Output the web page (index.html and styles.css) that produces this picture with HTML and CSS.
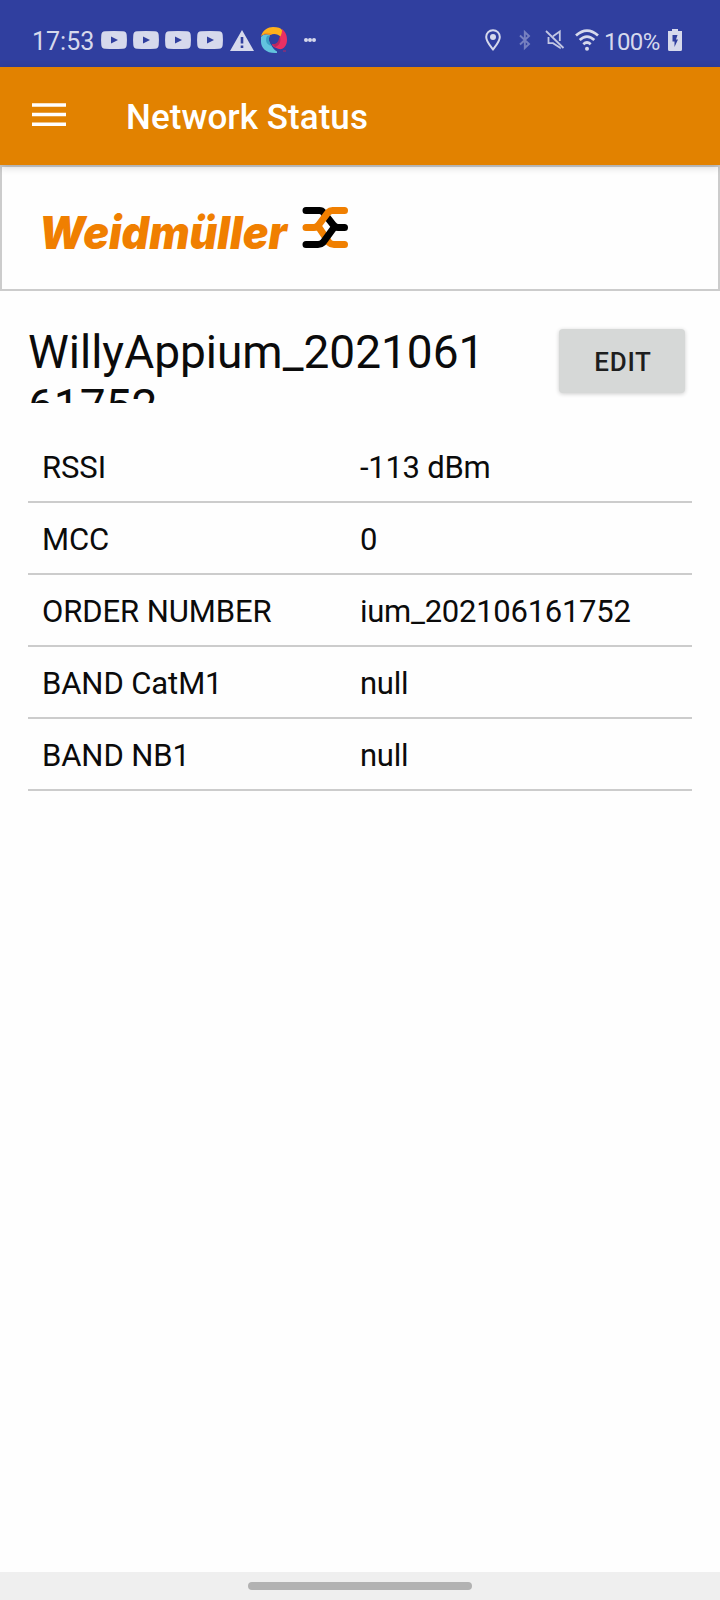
FILE: index.html
```html
<!DOCTYPE html>
<html lang="en">
<head>
<meta charset="utf-8">
<title>Network Status</title>
<link rel="stylesheet" href="styles.css">
</head>
<body>
<div class="screen">
  <div class="status-bar">
    <div class="status-left">
      <span class="clock">17:53</span>
      <svg class="video" viewBox="0 0 26 18"><path fill-rule="evenodd" d="M4 .3Q13-.3 22 .3Q25.5.5 25.7 4Q26.2 9 25.7 14Q25.5 17.500 22 17.700Q13 18.300 4 17.700Q.5 17.500.3 14Q-.2 9 .3 4Q.5.5 4 .3ZM10 5.500V12.500L17 9Z"/></svg>
      <svg class="video" viewBox="0 0 26 18"><path fill-rule="evenodd" d="M4 .3Q13-.3 22 .3Q25.5.5 25.7 4Q26.2 9 25.7 14Q25.5 17.500 22 17.700Q13 18.300 4 17.700Q.5 17.500.3 14Q-.2 9 .3 4Q.5.5 4 .3ZM10 5.500V12.500L17 9Z"/></svg>
      <svg class="video" viewBox="0 0 26 18"><path fill-rule="evenodd" d="M4 .3Q13-.3 22 .3Q25.5.5 25.7 4Q26.2 9 25.7 14Q25.5 17.500 22 17.700Q13 18.300 4 17.700Q.5 17.500.3 14Q-.2 9 .3 4Q.5.5 4 .3ZM10 5.500V12.500L17 9Z"/></svg>
      <svg class="video" viewBox="0 0 26 18"><path fill-rule="evenodd" d="M4 .3Q13-.3 22 .3Q25.5.5 25.7 4Q26.2 9 25.7 14Q25.5 17.500 22 17.700Q13 18.300 4 17.700Q.5 17.500.3 14Q-.2 9 .3 4Q.5.5 4 .3ZM10 5.500V12.500L17 9Z"/></svg>
      <svg class="warning" viewBox="0 0 24 21"><path fill-rule="evenodd" d="M12 0L24 21H0ZM10.700 7V13.500H13.300V7ZM10.700 15.500V18H13.300V15.500Z"/></svg>
      <svg class="swirl" viewBox="0 0 26 26">
        <path fill="#ffb11b" d="M0 9C2 3 7 0 12 0C17 0 20 1 21 3C21 6 21 8 20 10C17 7 13 6 9 8C5 7 3 7 0 9Z"/>
        <path fill="#f7931e" d="M0 9C3 5 7 5 11 7L9 8C5 7 3 7 0 9Z"/>
        <path fill="#ea3063" d="M21 2C25 5 26 9 26 13C26 19 22 23 18 22C14 21 11 19 11 17C16 18 19 15 19 10C21 7 21 5 21 2Z"/>
        <path fill="#b82760" d="M11 17C16 18 18 14 18.500 9C21 14 18 19 14 20Z"/>
        <path fill="#62c3de" d="M0 10C2 7 5 7 9 8C7 12 8 15 10 18C12 21 13 23 16 24.500V26C6 27 0 21 0 15Z"/>
        <path fill="#3aa1c6" d="M9 8C7 12 8 16 11 19C5 18 4 13 6 9Z"/>
        <path fill="#b82760" d="M22 23.500H25V24.500H22Z"/>
      </svg>
      <svg class="dots" viewBox="0 0 12 4"><circle cx="2" cy="2" r="2"/><circle cx="6" cy="2" r="2"/><circle cx="10" cy="2" r="2"/></svg>
    </div>
    <div class="status-right">
      <svg class="pin" viewBox="0 0 16 22"><path d="M8 1.200A6.700 6.700 0 0 0 1.200 8C1.200 12.500 5 16.500 8 20.300C11 16.500 14.800 12.500 14.800 8A6.700 6.700 0 0 0 8 1.200Z" fill="none" stroke="#d6d9ec" stroke-width="2"/><circle cx="8" cy="8" r="3"/></svg>
      <svg class="bluetooth" viewBox="0 0 12 20"><path d="M1 5.500L10 14L5.800 18V2L10 6L1 14.500"/></svg>
      <svg class="mute" viewBox="0 0 20 20"><path d="M1 1L18.500 18M8 6.200L14.800 1.500V11M14.800 17V17.500L8 13.200H3.500V7"/></svg>
      <svg class="wifi" viewBox="0 0 24 22"><path d="M1 6.600Q12-3.400 23 6.600M4.700 11Q12 4.200 19.300 11M8.300 15.200Q12 11.800 15.700 15.200"/><circle cx="12" cy="19.800" r="2"/></svg>
      <span class="percent">100%</span>
      <svg class="battery" viewBox="0 0 14 22"><path fill-rule="evenodd" d="M4 0H10V2H14V20.500Q14 22 12.500 22H1.500Q0 22 0 20.500V2H4ZM4.500 6V12.500H6.500V18L10 10.500H8L9.500 6Z"/></svg>
    </div>
  </div>
  <header class="app-bar">
    <svg class="menu" viewBox="0 0 34 24"><path d="M0 .3H34V3.800H0ZM0 9.800H34V13.300H0ZM0 19.500H34V23H0Z"/></svg>
    <h1 class="app-title">Network Status</h1>
  </header>
  <div class="brand">
    <svg class="logo" viewBox="0 0 320 60">
      <text class="wordmark" x="-3" y="47" textLength="248" lengthAdjust="spacingAndGlyphs">Weidmüller</text>
      <g class="mark">
        <path class="black" d="M264 8.500H277.500Q280 8.500 281.500 10.500L291 22.500Q293 25.500 296 25.500H302.500"/>
        <path class="orange" d="M302.500 8.500H290.500Q288 8.500 286 10.500L277 22.500Q275 25.500 272 25.500H264"/>
        <path class="orange" d="M277 25.500L287 40.500Q289 42.500 292 42.500H302.500"/>
        <path class="black" d="M292 25.500L281 40.500Q279 42.500 276 42.500H264"/>
      </g>
    </svg>
  </div>
  <main class="content">
    <div class="device">
      <div class="device-name">WillyAppium_202106161752</div>
      <button class="edit">EDIT</button>
    </div>
    <div class="rows">
      <div class="row"><span>RSSI</span><span>-113 dBm</span></div>
      <div class="row"><span>MCC</span><span>0</span></div>
      <div class="row"><span>ORDER NUMBER</span><span>ium_202106161752</span></div>
      <div class="row"><span>BAND CatM1</span><span>null</span></div>
      <div class="row"><span>BAND NB1</span><span>null</span></div>
    </div>
  </main>
  <div class="nav-bar"><div class="handle"></div></div>
</div>
</body>
</html>
```
FILE: styles.css
```css
* { box-sizing: border-box; }
body { margin: 0; background: #fefefe; font-family: Roboto, "Liberation Sans", sans-serif; color: #0b0b0b; }
svg { display: block; flex: none; overflow: visible; }
.screen { display: flex; flex-direction: column; width: 720px; height: 1600px; overflow: hidden; }

.status-bar { display: flex; justify-content: space-between; height: 67px; padding: 13px 38px 0 32px; background: #303f9f; color: #d6d9ec; fill: #d6d9ec; }
.status-left, .status-right { display: flex; align-items: center; height: 54px; }
.clock, .percent { font-size: 25px; line-height: 30px; white-space: nowrap; flex: none; padding-top: 3px; }
.clock { width: 69px; padding-top: 4px; }
.video { width: 26px; height: 18px; margin-right: 6px; }
.warning { width: 24px; height: 21px; margin: 0 7px 0 1px; }
.swirl { width: 26px; height: 26px; }
.dots { width: 12px; height: 4px; margin-left: 17px; }
.pin { width: 16px; height: 22px; }
.bluetooth { width: 12px; height: 20px; margin-left: 18px; fill: none; stroke: #7780c0; stroke-width: 1.9; }
.mute { width: 20px; height: 20px; margin-left: 14px; fill: none; stroke: #c3c7e3; stroke-width: 1.8; }
.wifi { width: 24px; height: 22px; margin-left: 10px; }
.wifi path { fill: none; stroke: #d6d9ec; stroke-width: 2.7; }
.percent { width: 64px; margin-left: 5px; font-size: 24px; letter-spacing: -.6px; }
.battery { width: 14px; height: 22px; }

.app-bar { display: flex; height: 98px; padding: 36px 32px 0; background: #e28200; color: #fff; position: relative; box-shadow: 0 2px 8px rgba(0,0,0,.18); }
.menu { width: 34px; height: 24px; fill: #fff; }
.app-title { margin: -5px 0 0 60px; font-size: 35px; line-height: 40px; font-weight: 500; letter-spacing: .05px; white-space: nowrap; }

.brand { height: 126px; padding: 36px 40px; border: 2px solid #ccc; }
.logo { width: 320px; height: 60px; margin-top: -1px; }
.wordmark { font-family: Inter, Roboto, sans-serif; font-size: 45px; font-style: italic; font-weight: 900; fill: #f07f00; }
.mark { fill: none; stroke-width: 7; stroke-linecap: round; }
.black { stroke: #000; }
.orange { stroke: #f07f00; }

.content { flex: 1; padding: 34px 28px 0; }
.device { display: flex; justify-content: space-between; align-items: flex-start; height: 78px; padding-right: 7px; }
.device-name { width: 460px; height: 78px; overflow: hidden; font-size: 46px; line-height: 54px; overflow-wrap: anywhere; }
.edit { width: 126px; height: 64px; margin-top: 4px; padding: 2px 0 0 2px; border: 0; border-radius: 4px; background: #d6d8d7; color: #1e1e1e; font: 500 26px/62px Roboto, sans-serif; letter-spacing: .7px; box-shadow: 0 1px 4px rgba(0,0,0,.2); }
.rows { margin-top: 28px; }
.row { display: grid; grid-template-columns: 1fr 1fr; height: 72px; padding-top: 19px; border-bottom: 2px solid #ccc; font-size: 31px; line-height: 36px; white-space: nowrap; }
.row span:first-child { padding-left: 14px; letter-spacing: -.09px; }
.row span:last-child { letter-spacing: -.27px; }

.nav-bar { display: flex; justify-content: center; align-items: center; height: 28px; background: #efefef; }
.handle { width: 224px; height: 8px; border-radius: 4px; background: #b2b2b2; }
```
